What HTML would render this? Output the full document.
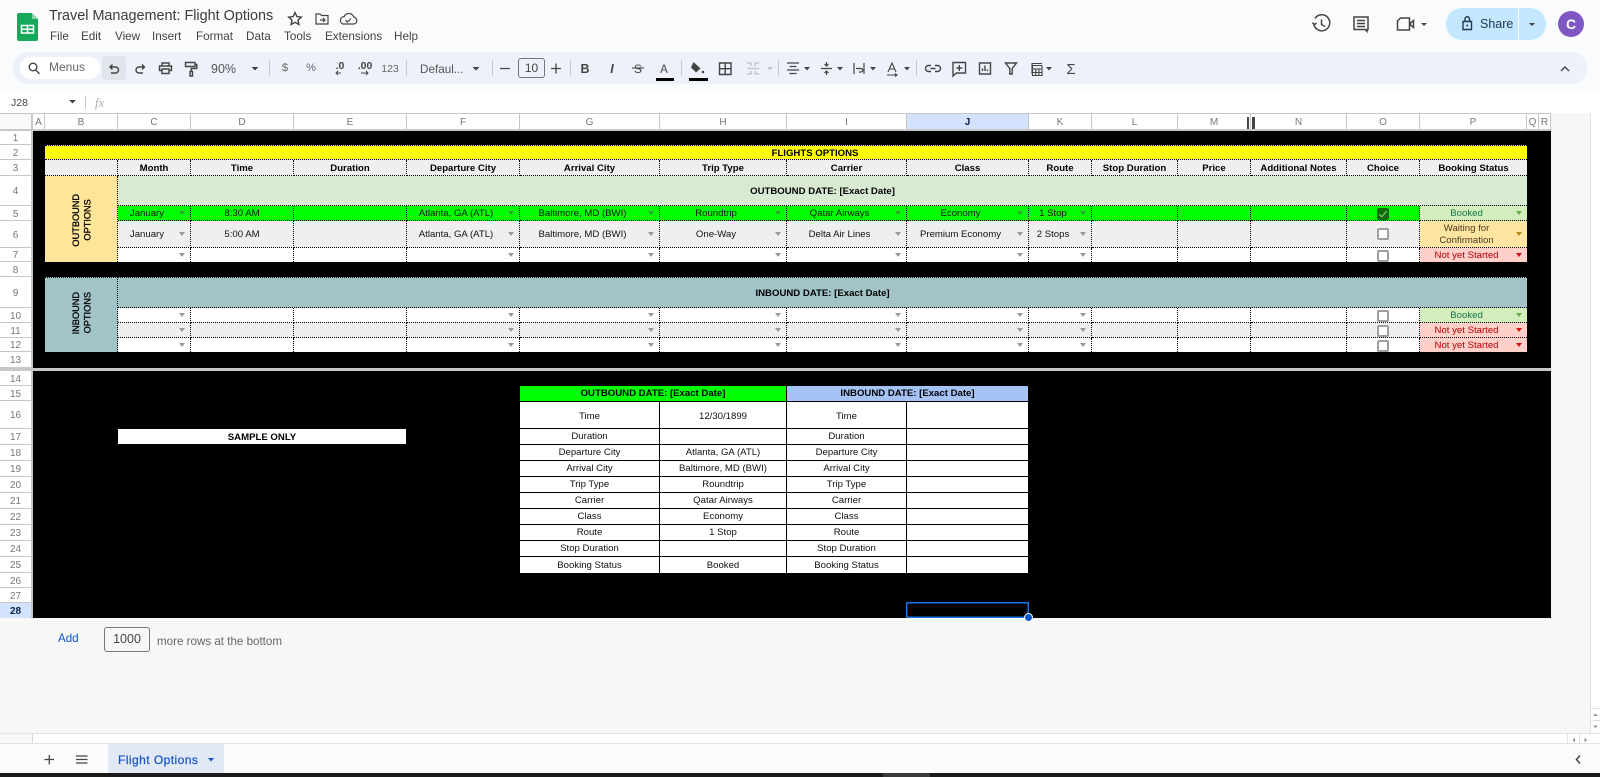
<!DOCTYPE html>
<html><head><meta charset="utf-8"><title>Travel Management: Flight Options</title>
<style>
html,body{margin:0;padding:0;width:1600px;height:777px;overflow:hidden;background:#f6f8f6;font-family:"Liberation Sans",Arial,sans-serif}
div,span,td{box-sizing:border-box}
.a{position:absolute}
.rh,.ch{position:absolute;display:flex;align-items:center;justify-content:center;background:#fff;color:#777;font-size:10px;border-color:#c7c7c7;border-style:solid;border-width:0}
.rh{left:0;width:31px;border-bottom-width:1px;padding-top:2px}
.ch{top:114px;height:17px;border-right-width:1px;border-bottom-width:2px;padding-top:1px}
.sel{background:#d3e3fd;color:#041e49;font-weight:bold}
table{position:absolute;border-collapse:separate;border-spacing:0;table-layout:fixed}
td{padding:0;text-align:center;vertical-align:middle;font-size:9.6px;line-height:13px;color:#111;position:relative;overflow:hidden}
.t td{border-right:1px dotted #000;border-bottom:1px dotted #000;padding-top:1px}
.t td.nb{border-bottom:0}.t td.nr{border-right:0}
.t tr.r2 td{padding-top:2px;line-height:12px}
.g td{background:#00ff00}.e td{background:#efefef}.w td{background:#fff}
.h td{background:#efefef;font-weight:bold;color:#000}
.t td.d{padding-right:14px}
td.d::after{content:"";position:absolute;right:5px;top:50%;margin-top:-2px;border-left:3.5px solid transparent;border-right:3.5px solid transparent;border-top:4px solid #999}
.g td.d::after{border-top-color:#3c9c3c}
.t td.bk{background:#d4edbc;color:#11734b}.t td.bk::after{border-top-color:#6aa84f}
.t td.wt{background:#ffe5a0;color:#473821;line-height:12px;padding-top:2px}.t td.wt::after{border-top-color:#b58a16}
.t td.ns{background:#ffcfc9;color:#b10202}.t td.ns::after{border-top-color:#e01010}
.cb{display:block;width:12px;height:12px;border:2px solid #9e9e9e;border-radius:2px;margin:-1px auto 0;background:#fff}
.cb.on{background:#0b6b0b;border-color:#0b6b0b;position:relative}
.cb.on::after{content:"";position:absolute;left:2px;top:-1px;width:3px;height:7px;border:solid #7ee07e;border-width:0 1.5px 1.5px 0;transform:rotate(40deg)}
.v{writing-mode:vertical-rl;transform:rotate(180deg);font-weight:normal;-webkit-text-stroke:.3px #000;font-size:9.2px;line-height:11.5px;color:#000;display:inline-block;text-align:center;position:relative;left:1px}
.s td{border-right:1px solid #000;border-bottom:1px solid #000;background:#fff;color:#111}
.s td.x{border-right:0}
.m{position:absolute;top:30px;font-size:11.7px;line-height:14px;color:#444}
svg{position:absolute;left:0;top:0}
svg text{font-family:"Liberation Sans",Arial,sans-serif}
</style></head><body>
<!-- top chrome -->
<div class="a" style="left:0;top:0;width:1600px;height:91px;background:#f9fbfd"></div>
<div class="a" style="left:13px;top:52px;width:1574px;height:32px;background:#edf2fa;border-radius:16px"></div>
<div class="a" style="left:20px;top:57px;width:80px;height:22px;background:#fff;border-radius:11px"></div>
<div class="a" style="left:49px;top:60px;font-size:12px;line-height:15px;color:#666">Menus</div>
<div class="a" style="left:102px;top:56px;width:24px;height:24px;background:#e1e5ec;border-radius:3px"></div>
<div class="a" style="left:0;top:91px;width:1600px;height:22px;background:#fff"></div>
<div class="a" style="left:49px;top:6px;font-size:14.4px;line-height:20px;color:#3c3c3c;white-space:nowrap">Travel Management: Flight Options</div>
<div class="m" style="left:50px">File</div><div class="m" style="left:81px">Edit</div><div class="m" style="left:115px">View</div><div class="m" style="left:152px">Insert</div><div class="m" style="left:196px">Format</div><div class="m" style="left:246px">Data</div><div class="m" style="left:284px">Tools</div><div class="m" style="left:325px">Extensions</div><div class="m" style="left:394px">Help</div>
<div class="a" style="left:518px;top:58px;width:27px;height:20px;border:1px solid #747775;border-radius:3px;font-size:12px;line-height:18px;text-align:center;color:#444">10</div>
<div class="a" style="left:1446px;top:8px;width:100px;height:32px;background:#c2e7ff;border-radius:16px"></div>
<div class="a" style="left:1518px;top:8px;width:1px;height:32px;background:#f9fbfd"></div>
<div class="a" style="left:1480px;top:17px;font-size:12.5px;line-height:15px;color:#24384a">Share</div>
<div class="a" style="left:1558px;top:11px;width:26px;height:26px;border-radius:50%;background:#7e57c2;color:#fff;font-size:14px;font-weight:bold;line-height:26px;text-align:center">C</div>

<!-- sheet base -->
<div class="a" style="left:0;top:113px;width:1551px;height:1px;background:#c7c7c7"></div>
<div class="a" style="left:0;top:114px;width:31px;height:17px;background:#f8f9fa;border-bottom:2px solid #c7c7c7"></div>
<div class="a" style="left:31px;top:114px;width:2px;height:504px;background:#c7c7c7"></div>
<div class="ch" style="left:33px;width:12px">A</div>
<div class="ch" style="left:45px;width:73px">B</div>
<div class="ch" style="left:118px;width:73px">C</div>
<div class="ch" style="left:191px;width:103px">D</div>
<div class="ch" style="left:294px;width:113px">E</div>
<div class="ch" style="left:407px;width:113px">F</div>
<div class="ch" style="left:520px;width:140px">G</div>
<div class="ch" style="left:660px;width:127px">H</div>
<div class="ch" style="left:787px;width:120px">I</div>
<div class="ch sel" style="left:907px;width:122px">J</div>
<div class="ch" style="left:1029px;width:63px">K</div>
<div class="ch" style="left:1092px;width:86px">L</div>
<div class="ch" style="left:1178px;width:73px">M</div>
<div class="ch" style="left:1251px;width:96px">N</div>
<div class="ch" style="left:1347px;width:73px">O</div>
<div class="ch" style="left:1420px;width:107px">P</div>
<div class="ch" style="left:1527px;width:12px">Q</div>
<div class="ch" style="left:1539px;width:12px">R</div>
<div class="a" style="left:1247px;top:117px;width:2px;height:12px;background:#444"></div>
<div class="a" style="left:1252px;top:117px;width:3px;height:12px;background:#444"></div>

<div class="rh" style="top:131px;height:14px">1</div>
<div class="rh" style="top:145px;height:15px">2</div>
<div class="rh" style="top:160px;height:16px">3</div>
<div class="rh" style="top:176px;height:30px">4</div>
<div class="rh" style="top:206px;height:15px">5</div>
<div class="rh" style="top:221px;height:27px">6</div>
<div class="rh" style="top:248px;height:14px">7</div>
<div class="rh" style="top:262px;height:15px">8</div>
<div class="rh" style="top:277px;height:31px">9</div>
<div class="rh" style="top:308px;height:15px">10</div>
<div class="rh" style="top:323px;height:15px">11</div>
<div class="rh" style="top:338px;height:14px">12</div>
<div class="rh" style="top:352px;height:16px">13</div>
<div class="rh" style="top:371px;height:15px">14</div>
<div class="rh" style="top:386px;height:15px">15</div>
<div class="rh" style="top:401px;height:28px">16</div>
<div class="rh" style="top:429px;height:16px">17</div>
<div class="rh" style="top:445px;height:16px">18</div>
<div class="rh" style="top:461px;height:16px">19</div>
<div class="rh" style="top:477px;height:16px">20</div>
<div class="rh" style="top:493px;height:16px">21</div>
<div class="rh" style="top:509px;height:16px">22</div>
<div class="rh" style="top:525px;height:16px">23</div>
<div class="rh" style="top:541px;height:16px">24</div>
<div class="rh" style="top:557px;height:16px">25</div>
<div class="rh" style="top:573px;height:15px">26</div>
<div class="rh" style="top:588px;height:15px">27</div>
<div class="rh sel" style="top:603px;height:15px;border-bottom:0">28</div>

<div class="a" style="left:33px;top:131px;width:1518px;height:237px;background:#000"></div>
<div class="a" style="left:33px;top:371px;width:1518px;height:247px;background:#000"></div>
<div class="a" style="left:0;top:368px;width:1551px;height:3px;background:#c7c7c7"></div>

<!-- outbound table -->
<table class="t" style="left:45px;top:145px;width:1482px">
<colgroup><col style="width:73px"><col style="width:73px"><col style="width:103px"><col style="width:113px"><col style="width:113px"><col style="width:140px"><col style="width:127px"><col style="width:120px"><col style="width:122px"><col style="width:63px"><col style="width:86px"><col style="width:73px"><col style="width:96px"><col style="width:73px"><col style="width:107px"></colgroup>
<tr style="height:15px"><td colspan="15" class="nr" style="background:#ffff00;font-weight:bold;color:#000;border-top:1px dotted #000;padding-left:58px;padding-top:2px;line-height:11px">FLIGHTS OPTIONS</td></tr>
<tr class="h" style="height:16px"><td></td><td>Month</td><td>Time</td><td>Duration</td><td>Departure City</td><td>Arrival City</td><td>Trip Type</td><td>Carrier</td><td>Class</td><td>Route</td><td>Stop Duration</td><td>Price</td><td>Additional Notes</td><td>Choice</td><td class="nr">Booking Status</td></tr>
<tr style="height:30px"><td rowspan="4" class="nb" style="background:#ffe599"><span class="v" style="top:3px">OUTBOUND<br>OPTIONS</span></td><td colspan="14" class="nr" style="background:#d9ead3;font-weight:bold;color:#000">OUTBOUND DATE: [Exact Date]</td></tr>
<tr class="g r2" style="height:15px"><td class="d">January</td><td>8:30 AM</td><td></td><td class="d">Atlanta, GA (ATL)</td><td class="d">Baltimore, MD (BWI)</td><td class="d">Roundtrip</td><td class="d">Qatar Airways</td><td class="d">Economy</td><td class="d">1 Stop</td><td></td><td></td><td></td><td><span class="cb on"></span></td><td class="d bk nr">Booked</td></tr>
<tr class="e" style="height:27px"><td class="d">January</td><td>5:00 AM</td><td></td><td class="d">Atlanta, GA (ATL)</td><td class="d">Baltimore, MD (BWI)</td><td class="d">One-Way</td><td class="d">Delta Air Lines</td><td class="d">Premium Economy</td><td class="d">2 Stops</td><td></td><td></td><td></td><td><span class="cb"></span></td><td class="d wt nr">Waiting for<br>Confirmation</td></tr>
<tr class="w r2" style="height:14px"><td class="d nb"></td><td class="nb"></td><td class="nb"></td><td class="d nb"></td><td class="d nb"></td><td class="d nb"></td><td class="d nb"></td><td class="d nb"></td><td class="d nb"></td><td class="nb"></td><td class="nb"></td><td class="nb"></td><td class="nb"><span class="cb"></span></td><td class="d ns nb nr">Not yet Started</td></tr>
</table>

<!-- inbound table -->
<table class="t" style="left:45px;top:277px;width:1482px">
<colgroup><col style="width:73px"><col style="width:73px"><col style="width:103px"><col style="width:113px"><col style="width:113px"><col style="width:140px"><col style="width:127px"><col style="width:120px"><col style="width:122px"><col style="width:63px"><col style="width:86px"><col style="width:73px"><col style="width:96px"><col style="width:73px"><col style="width:107px"></colgroup>
<tr style="height:31px"><td rowspan="4" class="nb" style="background:#a2c4c9;border-top:1px dotted #000"><span class="v">INBOUND<br>OPTIONS</span></td><td colspan="14" class="nr" style="background:#a2c4c9;font-weight:bold;color:#000;border-top:1px dotted #000">INBOUND DATE: [Exact Date]</td></tr>
<tr class="w r2" style="height:15px"><td class="d"></td><td></td><td></td><td class="d"></td><td class="d"></td><td class="d"></td><td class="d"></td><td class="d"></td><td class="d"></td><td></td><td></td><td></td><td><span class="cb"></span></td><td class="d bk nr">Booked</td></tr>
<tr class="e r2" style="height:15px"><td class="d"></td><td></td><td></td><td class="d"></td><td class="d"></td><td class="d"></td><td class="d"></td><td class="d"></td><td class="d"></td><td></td><td></td><td></td><td><span class="cb"></span></td><td class="d ns nr">Not yet Started</td></tr>
<tr class="w r2" style="height:14px"><td class="d nb"></td><td class="nb"></td><td class="nb"></td><td class="d nb"></td><td class="d nb"></td><td class="d nb"></td><td class="d nb"></td><td class="d nb"></td><td class="d nb"></td><td class="nb"></td><td class="nb"></td><td class="nb"></td><td class="nb"><span class="cb"></span></td><td class="d ns nb nr">Not yet Started</td></tr>
</table>

<div class="a" style="left:118px;top:429px;width:288px;height:15px;background:#fff;font-size:9.6px;font-weight:bold;line-height:17px;text-align:center;color:#000;overflow:hidden">SAMPLE ONLY</div>

<!-- sample table -->
<table class="s" style="left:520px;top:386px;width:508px">
<colgroup><col style="width:140px"><col style="width:127px"><col style="width:120px"><col style="width:121px"></colgroup>
<tr style="height:16px"><td colspan="2" style="background:#00ff00;font-weight:bold;color:#000">OUTBOUND DATE: [Exact Date]</td><td colspan="2" class="x" style="background:#a4c2f4;font-weight:bold;color:#000">INBOUND DATE: [Exact Date]</td></tr>
<tr style="height:27px"><td style="padding-top:2px">Time</td><td style="padding-top:2px">12/30/1899</td><td style="padding-top:2px">Time</td><td class="x"></td></tr>
<tr style="height:16px"><td>Duration</td><td></td><td>Duration</td><td class="x"></td></tr>
<tr style="height:16px"><td>Departure City</td><td>Atlanta, GA (ATL)</td><td>Departure City</td><td class="x"></td></tr>
<tr style="height:16px"><td>Arrival City</td><td>Baltimore, MD (BWI)</td><td>Arrival City</td><td class="x"></td></tr>
<tr style="height:16px"><td>Trip Type</td><td>Roundtrip</td><td>Trip Type</td><td class="x"></td></tr>
<tr style="height:16px"><td>Carrier</td><td>Qatar Airways</td><td>Carrier</td><td class="x"></td></tr>
<tr style="height:16px"><td>Class</td><td>Economy</td><td>Class</td><td class="x"></td></tr>
<tr style="height:16px"><td>Route</td><td>1 Stop</td><td>Route</td><td class="x"></td></tr>
<tr style="height:16px"><td>Stop Duration</td><td></td><td>Stop Duration</td><td class="x"></td></tr>
<tr style="height:16px"><td style="border-bottom:0">Booking Status</td><td style="border-bottom:0">Booked</td><td style="border-bottom:0">Booking Status</td><td class="x" style="border-bottom:0"></td></tr>
</table>

<!-- selection -->
<div class="a" style="left:906px;top:602px;width:123px;height:16px;border:1px solid #1a73e8;box-shadow:inset 0 0 0 .5px #1a73e8"></div>
<div class="a" style="left:1024px;top:613px;width:9px;height:9px;background:#0b57d0;border:1px solid #fff;border-radius:50%"></div>

<!-- add rows -->
<div class="a" style="left:58px;top:631px;font-size:11.6px;line-height:15px;color:#1155cc">Add</div>
<div class="a" style="left:104px;top:627px;width:46px;height:25px;border:1px solid #777;border-radius:3px;font-size:12.5px;line-height:22px;text-align:center;color:#444">1000</div>
<div class="a" style="left:157px;top:634px;font-size:11.6px;line-height:15px;color:#666">more rows at the bottom</div>

<!-- scrollbars -->
<div class="a" style="left:1590px;top:113px;width:10px;height:630px;background:#fff;border-left:1px solid #e1e3e1"></div>
<div class="a" style="left:0;top:733px;width:1600px;height:11px;background:#fff;border-top:1px solid #e1e3e1;border-bottom:1px solid #e1e3e1"></div>
<div class="a" style="left:0;top:734px;width:33px;height:9px;background:#f6f8f6;border-right:1px solid #d5d5d5"></div>
<div class="a" style="left:1567px;top:734px;width:1px;height:9px;background:#e1e3e1"></div>
<div class="a" style="left:1579px;top:734px;width:1px;height:9px;background:#e1e3e1"></div>
<div class="a" style="left:1591px;top:708px;width:9px;height:1px;background:#e1e3e1"></div>
<div class="a" style="left:1591px;top:720px;width:9px;height:1px;background:#e1e3e1"></div>
<div class="a" style="left:1591px;top:733px;width:9px;height:1px;background:#e1e3e1"></div>

<!-- tab bar -->
<div class="a" style="left:0;top:744px;width:1600px;height:29px;background:#f9fbfd"></div>
<div class="a" style="left:108px;top:744px;width:116px;height:29px;background:#e1e9f7"></div>
<div class="a" style="left:118px;top:752px;font-size:12px;line-height:16px;letter-spacing:.45px;-webkit-text-stroke:.25px #1a56c8;color:#1a56c8;white-space:nowrap">Flight Options</div>
<div class="a" style="left:0;top:773px;width:1600px;height:4px;background:#1a1a1a"></div>
<div class="a" style="left:883px;top:773px;width:47px;height:4px;background:#3a3a3a"></div>

<svg width="1600" height="777" viewBox="0 0 1600 777" fill="none" stroke="#444" stroke-width="1.4">
<!-- sheets logo -->
<path d="M19 13H32L38 19V39a2 2 0 0 1-2 2H19a2 2 0 0 1-2-2V15a2 2 0 0 1 2-2Z" fill="#17a85a" stroke="none"/>
<path d="M32 13L38 19H32Z" fill="#8ed1ab" stroke="none"/>
<path d="M21.5 25.5H33.5V33H21.5ZM21.5 29.2H33.5M27.5 25.5V33" stroke="#fff" stroke-width="1.5"/>
<!-- title icons -->
<path d="M295 12.5l1.9 4.1 4.4.5-3.3 3 .9 4.4-3.9-2.2-3.9 2.2.9-4.4-3.3-3 4.4-.5Z"/>
<path d="M316 14h4l1.5 1.5H328v8.5h-12ZM320 20h4.5M323 18l2 2-2 2" stroke-width="1.2"/>
<path d="M343 24h10a3.5 3.5 0 0 0 .6-7 5 5 0 0 0-9.4-.4 3.8 3.8 0 0 0-1.2 7.4ZM345.5 20l2 2 3.5-3.5" stroke-width="1.2"/>
<!-- search -->
<circle cx="33" cy="67" r="3.8"/><path d="M35.8 70l3.7 3.7"/>
<!-- undo redo print roller -->
<path d="M112.5 64.5L110 67l2.5 2.5M110 67h5.5a3 3 0 0 1 0 6H111"/>
<path d="M142 64.5l2.5 2.5-2.5 2.5M144.5 67H139a3 3 0 0 0 0 6h4"/>
<path d="M162 70.5h-2.5v-4.5h12v4.5H169M162 66v-3h7v3M162 69h7v4.5h-7Z"/>
<path d="M185.5 62.5h9.5v4h-9.5ZM195 64.5h1.8v4h-5.6v2.5M190 71.5h2.5v4.5H190Z"/>
<!-- carets -->
<g fill="#444" stroke="none">
<path d="M251.5 67h7l-3.5 3.5ZM472.5 67h7l-3.5 3.5Z"/>
<path d="M767 67h6l-3 3.5Z" fill="#c4c7c5"/>
<path d="M804 67h6l-3 3.5ZM837 67h6l-3 3.5ZM870 67h6l-3 3.5ZM904 67h6l-3 3.5ZM1046 67h6l-3 3.5Z"/>
<path d="M69 100h7l-3.5 3.5Z"/>
<path d="M1421 23h6l-3 3ZM1529 23h6l-3 3Z"/>
</g>
<!-- separators -->
<path d="M269.5 60v16M406.5 60v16M492.5 60v16M570.5 60v16M681.5 60v16M778.5 60v16M916.5 60v16M85.5 96v13" stroke="#c7c7c7" stroke-width="1"/>
<!-- toolbar text -->
<g fill="#666" stroke="none" font-size="11">
<text x="285" y="71" text-anchor="middle">$</text>
<text x="311" y="71" text-anchor="middle">%</text>
<text x="340" y="69" text-anchor="middle" font-weight="bold" fill="#444" font-size="10.5">.0</text>
<text x="365" y="69" text-anchor="middle" font-weight="bold" fill="#444" font-size="10.5">.00</text>
<text x="390" y="72" text-anchor="middle" font-size="10.5">123</text>
<text x="211" y="73" font-size="12.5" fill="#555">90%</text>
<text x="420" y="73" font-size="11.7" fill="#555">Defaul...</text>
<text x="585" y="73" text-anchor="middle" font-weight="bold" font-size="12.5" fill="#444">B</text>
<text x="612" y="73" text-anchor="middle" font-style="italic" font-weight="bold" font-size="12.5" fill="#444">I</text>
<text x="638" y="73" text-anchor="middle" font-size="12" fill="#444">S</text>
<text x="664" y="73" text-anchor="middle" font-size="11.5" fill="#444">A</text>
<text x="1071" y="74" text-anchor="middle" font-size="15" fill="#444" font-family="DejaVu Sans">Σ</text>
<text x="11" y="106" font-size="10.5" fill="#444">J28</text>
<text x="95" y="107" font-size="12.5" font-style="italic" fill="#aaa" style="font-family:'Liberation Serif',serif">fx</text>
</g>
<path d="M336 73h5M338 71l-2 2 2 2M361 73h7M366 71l2 2-2 2" stroke-width="1"/>
<path d="M632 68h12" stroke-width="1.1"/>
<rect x="656" y="78" width="18" height="3" fill="#000" stroke="none"/>
<rect x="689" y="78" width="19" height="3" fill="#000" stroke="none"/>
<path d="M500 68.5h10M551 68.5h10M556 63.5v10" stroke-width="1.3"/>
<!-- fill -->
<path d="M693.5 62l7 6.5-4.5 4-5-5Z" fill="#444" stroke="none"/><circle cx="703" cy="72" r="1.3" fill="#444" stroke="none"/>
<!-- borders -->
<path d="M719.5 63h11.5v11.5h-11.5ZM725.2 63v11.5M719.5 68.7h11.5"/>
<!-- merge -->
<path d="M747 63h4v3M759 63h-4v3M747 74h4v-3M759 74h-4v-3M747 68.5h12" stroke="#c4c7c5"/>
<!-- align -->
<path d="M787 63h12M789.5 66.5h7M787 70h12M789.5 73.5h7" stroke-width="1.2"/>
<path d="M821 68.5h11M826.5 62v3.5M826.5 71.5v3.5M824.5 64l2 2 2-2M824.5 73l2-2 2 2" stroke-width="1.2"/>
<path d="M854 63v11M864 63v11M856 68.5h5a1.7 1.7 0 0 1 0 3.5h-2" stroke-width="1.2"/>
<path d="M888 72l4-9 4 9M889.5 69h5M887 75h10M895 73.5l2 1.5-2 1.5" stroke-width="1.1"/>
<!-- link comment chart filter function -->
<path d="M931 65.5h-2.5a3 3 0 0 0 0 6h2.5M935 65.5h2.5a3 3 0 0 1 0 6H935M930.5 68.5h5"/>
<path d="M953 62.5h12.5v10.5h-9l-3.5 3ZM959.3 65v6M956.3 68h6"/>
<path d="M979.5 63h11v11h-11ZM982.5 71v-2.5M985 71v-5.5M987.5 71v-1.5"/>
<path d="M1005.5 63h11l-4.3 5.5v5.5h-2.4v-5.5Z"/>
<path d="M1032 74V63.5H1042M1032.5 65.5h9.5v10h-9.5ZM1032.5 69h9.5M1032.5 72.5h9.5M1035.7 69v6.5M1038.9 69v6.5" stroke-width="1.1"/>
<path d="M1561 71l4-4 4 4"/>
<!-- top right -->
<path d="M1315 18.5a8 8 0 1 1-1.2 5M1312.5 22.5l1.7 2.3 2.3-1.8M1321.5 19.5v5l3.5 2" stroke-width="1.5"/>
<path d="M1354 17h14v12.5h-1v2l-2-2h-11ZM1357 20.5h8M1357 23.5h8M1357 26.5h8" stroke-width="1.5"/>
<path d="M1397.5 21l3-3h9v12h-12ZM1409.5 24l4-3.5v7l-4-3.5" stroke-width="1.5"/>
<path d="M1463 21.5h8.5v8h-8.5ZM1465 21.5v-2.5a2.2 2.2 0 0 1 4.5 0v2.5" stroke="#24384a" stroke-width="1.4"/><circle cx="1467.2" cy="25.5" r="1" fill="#24384a" stroke="none"/>
<!-- bottom -->
<path d="M44.5 759.5h9.5M49.3 755v9.5M76 756h11.5M76 759.5h11.5M76 763h11.5" stroke="#444" stroke-width="1.3"/>
<path d="M208 758h6l-3 3.5Z" fill="#1a56c8" stroke="none"/>
<path d="M1580 755.5l-3.5 4 3.5 4" stroke-width="1.5"/>
<g fill="#999" stroke="none"><path d="M1575 737.5v5l-2.5-2.5ZM1584.5 737.5v5l2.5-2.5ZM1593 716h5l-2.5-2.5ZM1593 725.5h5l-2.5 2.5Z"/></g>
</svg>
</body></html>
